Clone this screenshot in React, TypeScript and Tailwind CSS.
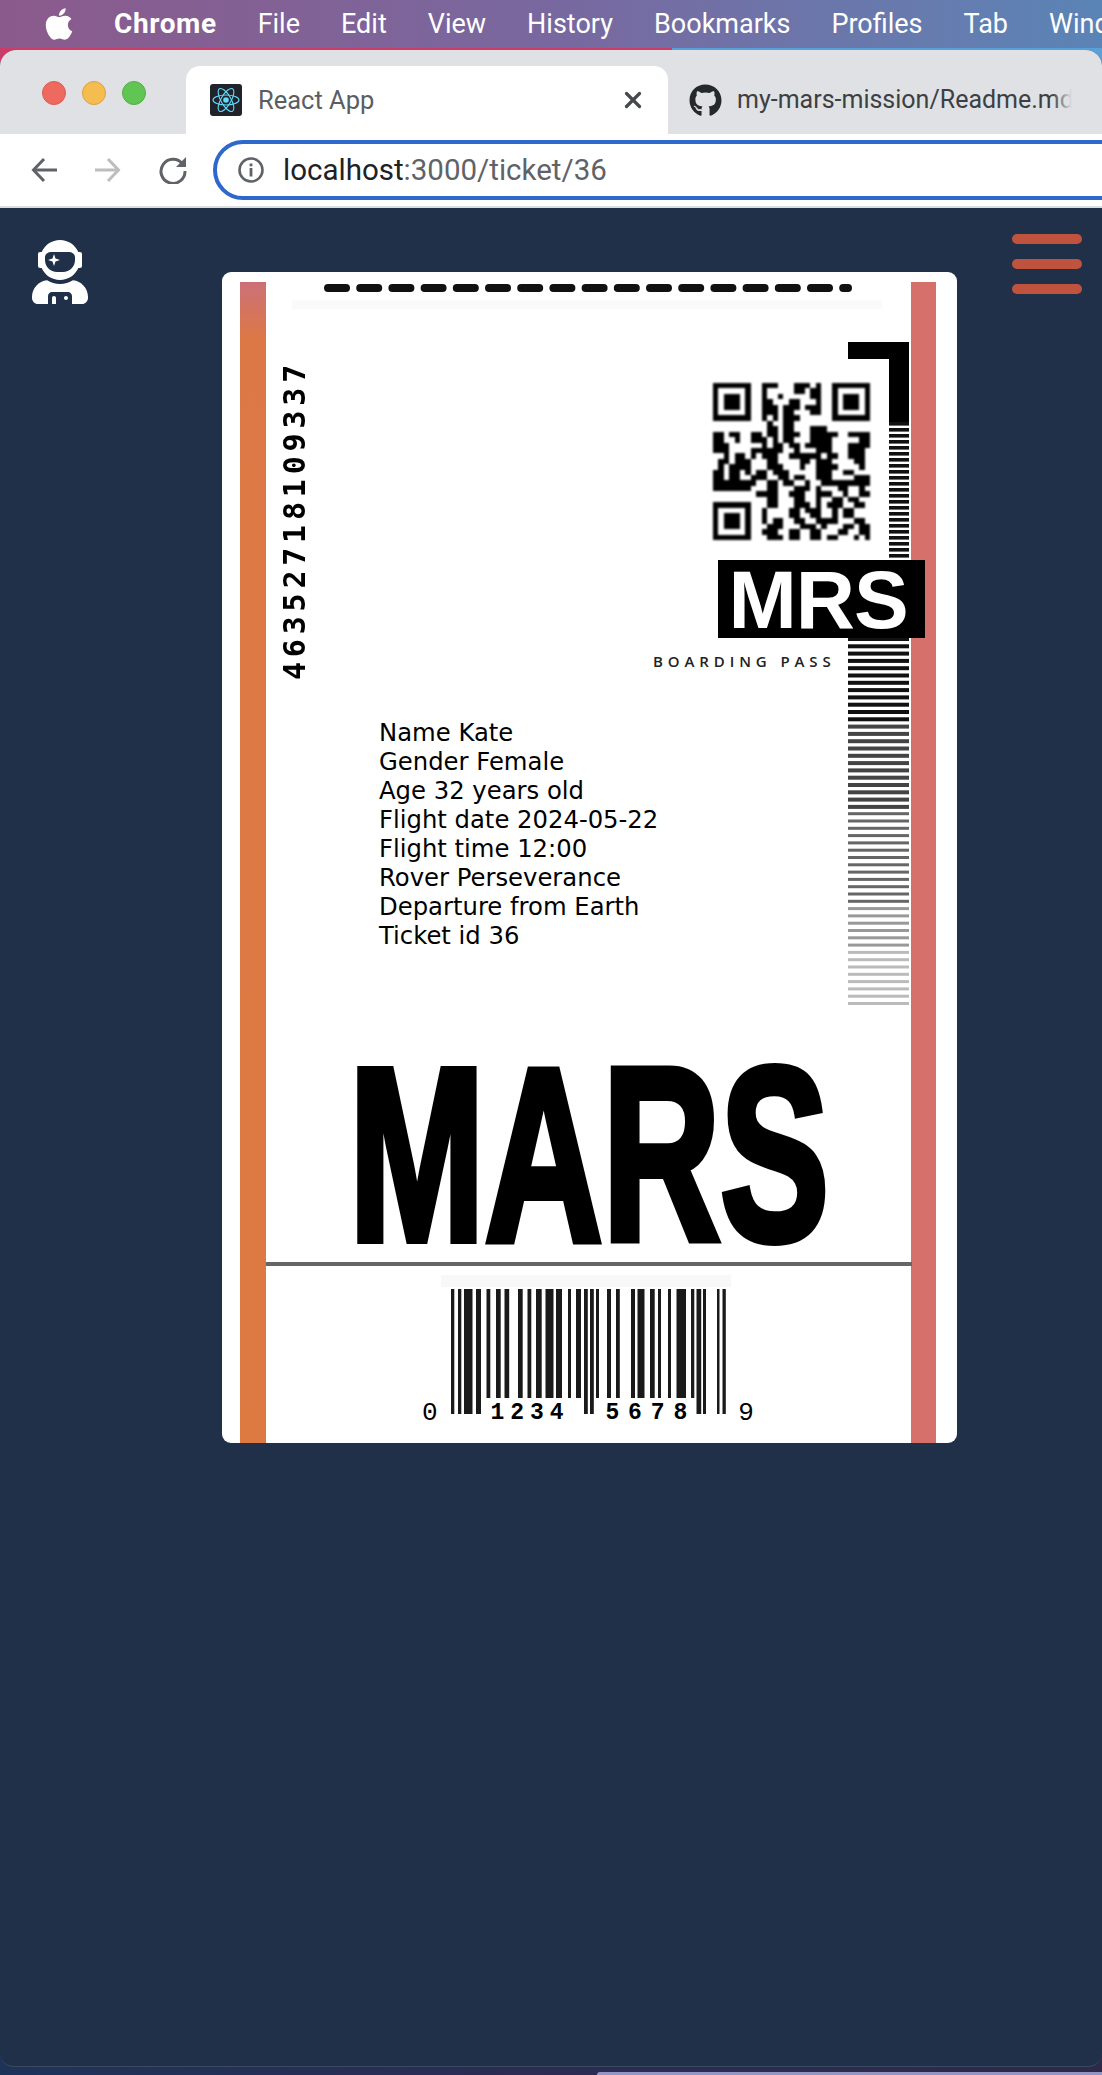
import { FaApple, FaGithub, FaUserAstronaut } from "react-icons/fa";
import { X } from "lucide-react";

const menuItems = ["File", "Edit", "View", "History", "Bookmarks", "Profiles", "Tab", "Window"];
const ticketLines = [
  "Name Kate",
  "Gender Female",
  "Age 32 years old",
  "Flight date 2024-05-22",
  "Flight time 12:00",
  "Rover Perseverance",
  "Departure from Earth",
  "Ticket id 36",
];

const qrRows = [
  "11111110011100011101001111111",
  "10000010010000011011001000001",
  "10111010010010000011001011101",
  "10111010011000110001001011101",
  "10111010011101110111001011101",
  "10000010011101100011001000001",
  "11111110010101110000001111111",
  "00000000001001100000000000000",
  "00000000001101100011100000000",
  "11011001101101110011111001111",
  "11001001110101100011110000011",
  "11100000010110110111110001111",
  "11100001111110010001110001110",
  "00101101011100111111011001110",
  "01101110001100001101110000110",
  "01011110001110001001111000010",
  "11011010110111000001110011000",
  "11011001110011011001110000111",
  "11111111001101100100111111111",
  "11111110001100011101000110010",
  "00000000111100111001110010011",
  "00000000001100011001001101100",
  "11111110001100011101011100110",
  "10000010010000110111001011000",
  "10111010010000110011001011000",
  "10111010010110011001111000110",
  "10111010001110001110100011011",
  "10000010011100110011000110011",
  "11111110001110110011011000101",
];

// x, width, long guard bar or not (ticket coordinates)
const barcodeBars: [number, number, boolean][] = [
  [229, 3.3, true], [236, 3.3, true], [242, 8.5, true], [254, 5, true],
  [264.5, 3.8, false], [274, 4.7, false], [282.5, 4.7, false], [296, 4.7, false], [305.5, 3.8, false],
  [314, 5.7, false], [323.5, 8, false], [334, 6, false], [346, 3, false], [354, 5, false],
  [362, 3.8, true], [368, 3.8, true], [374, 3, false], [385, 4, false], [394, 3.8, false],
  [409, 4, false], [415.5, 7, false], [428, 4.7, false], [436, 3, false], [446, 3, false],
  [454.5, 9.5, false], [469, 3.3, false], [474.5, 4.7, true], [481, 3, true], [495, 2.5, true], [500.5, 3.3, true],
];

const ladderRows = Array.from({ length: 51 }, (_, i) => i);

function QrCode() {
  return (
    <svg viewBox="0 0 29 29" className="h-[157px] w-[157px] blur-[0.8px]" shapeRendering="crispEdges">
      {qrRows.map((row, y) =>
        row.split("").map((cell, x) => (cell === "1" ? <rect key={x + "-" + y} x={x} y={y} width="1" height="1" fill="#000" /> : null))
      )}
    </svg>
  );
}

function TicketArt() {
  return (
    <svg viewBox="0 0 735 1171" className="absolute inset-0 h-full w-full blur-[0.7px]">
      <defs>
        <linearGradient id="leftStripe" x1="0" y1="0" x2="0" y2="1">
          <stop offset="0" stopColor="#cc7078" />
          <stop offset="0.05" stopColor="#dc7845" />
          <stop offset="1" stopColor="#dd7a42" />
        </linearGradient>
      </defs>
      <rect x="18" y="10" width="26" height="1161" fill="url(#leftStripe)" />
      <rect x="689" y="10" width="25" height="1161" fill="#d6706a" />
      <rect x="44" y="990" width="646" height="4" fill="#666" />
      <line x1="106" y1="16" x2="624" y2="16" stroke="#111" strokeWidth="8" strokeLinecap="round" strokeDasharray="18 14.2" />
      <rect x="622" y="12" width="8" height="8" rx="4" fill="#111" />
      <rect x="70" y="28" width="590" height="9" fill="#fafafa" />
      <rect x="626" y="70" width="61" height="17" fill="#000" />
      <rect x="667" y="70" width="20" height="80" fill="#000" />
      {Array.from({ length: 23 }, (_, i) => (
        <rect key={i} x="667" y={150 + i * 6} width="20" height="3.6" fill="#111" />
      ))}
      {ladderRows.map((i) => {
        const shade = i < 12 ? "#111" : i < 24 ? "#444" : i < 37 ? "#666" : i < 43 ? "#999" : "#bbb";
        return <rect key={i} x="626" y={365 + i * 7.3} width="61" height={i < 24 ? 4 : 3} fill={shade} />;
      })}
      <rect x="219" y="1003" width="290" height="12" fill="#f8f8f8" />
      {barcodeBars.map(([x, w, long]) => (
        <rect key={x} x={x} y="1017" width={w} height={long ? 125 : 109} fill="#1a1a1a" />
      ))}
    </svg>
  );
}

function ReactFavicon() {
  return (
    <svg viewBox="0 0 32 32" className="h-8 w-8 shrink-0">
      <rect width="32" height="32" rx="3" fill="#20232a" />
      <circle cx="16" cy="16" r="2.8" fill="#61dafb" />
      <g fill="none" stroke="#61dafb" strokeWidth="1.1">
        <ellipse cx="16" cy="16" rx="13" ry="5" />
        <ellipse cx="16" cy="16" rx="13" ry="5" transform="rotate(60 16 16)" />
        <ellipse cx="16" cy="16" rx="13" ry="5" transform="rotate(120 16 16)" />
      </g>
    </svg>
  );
}

function NavArrow({ flip, color }: { flip?: boolean; color: string }) {
  return (
    <svg
      viewBox="0 0 26 26"
      className={flip ? "h-[26px] w-[26px] shrink-0 -scale-x-100" : "h-[26px] w-[26px] shrink-0"}
      fill="none"
      stroke={color}
      strokeWidth="3"
    >
      <path d="M26 13H3" />
      <path d="M13 2 2.5 13 13 24" />
    </svg>
  );
}

export default function App() {
  return (
    <div className="flex h-[2075px] w-[1102px] flex-col overflow-hidden bg-linear-to-r from-[#1e3358] via-[#2b2c52] to-[#2c2a48] font-['Roboto',sans-serif]">
      <div className="flex h-[48px] shrink-0 items-center bg-linear-to-r from-[#8b5a8c] via-[#78689f] to-[#5a84b6] pl-[44px] text-[27px] leading-none whitespace-nowrap text-white">
        <FaApple className="h-[36px] w-[30px] shrink-0" />
        <span className="ml-[40px] text-[28px] font-bold tracking-[0.6px]">Chrome</span>
        <div className="ml-[41px] flex gap-[41px]">
          {menuItems.map((item) => (
            <span key={item}>{item}</span>
          ))}
        </div>
      </div>

      <div className="-mb-[17px] h-[19px] shrink-0 bg-linear-to-r from-[#c93d68] from-[61%] to-[#5aa0d8] to-[61%]" />

      <div className="relative flex h-[2017px] shrink-0 flex-col overflow-hidden rounded-t-[16px] rounded-b-[14px] border-b border-[#3b4a60] bg-[#203049]">
        <div className="flex h-[84px] shrink-0 items-end bg-[#dfe1e5]">
          <div className="flex h-[68px] w-[186px] shrink-0 items-start gap-[16px] pt-[15px] pl-[42px]">
            <span className="h-6 w-6 rounded-full border border-[#dc5a50] bg-[#ee6a5f]" />
            <span className="h-6 w-6 rounded-full border border-[#dca043] bg-[#f5bd4f]" />
            <span className="h-6 w-6 rounded-full border border-[#52ae46] bg-[#61c554]" />
          </div>
          <div className="flex h-[68px] w-[482px] shrink-0 items-center rounded-t-[14px] bg-white pr-[22px] pl-[24px]">
            <ReactFavicon />
            <span className="ml-[16px] text-[25.5px] text-[#5a5e63]">React App</span>
            <X className="ml-auto h-[26px] w-[26px] text-[#45484c]" strokeWidth={3} />
          </div>
          <div className="relative flex h-[68px] min-w-0 flex-1 items-center overflow-hidden pl-[21px]">
            <FaGithub className="h-[33px] w-[33px] shrink-0 text-[#24292e]" />
            <span className="ml-[15px] text-[25px] whitespace-nowrap text-[#3c4043]">my-mars-mission/Readme.md · GitHub</span>
            <div className="absolute top-0 right-0 bottom-0 w-[50px] bg-linear-to-r from-[#dfe1e5]/0 to-[#dfe1e5] to-40%" />
          </div>
        </div>

        <div className="flex h-[74px] shrink-0 items-center border-b-2 border-[#dcdde0] bg-white pl-[31px]">
          <NavArrow color="#5f6368" />
          <div className="ml-[38px] shrink-0">
            <NavArrow flip color="#bdbdbd" />
          </div>
          <svg viewBox="0 0 28 28" className="ml-[38px] h-[28px] w-[28px] shrink-0" fill="none">
            <path d="M23.5 8A12 12 0 1 0 26 15" stroke="#5f6368" strokeWidth="3" />
            <path d="M27 1v10H17z" fill="#5f6368" />
          </svg>
          <div className="ml-[26px] flex h-[60px] w-[1000px] shrink-0 items-center rounded-full border-[4px] border-[#2f68cc] pl-[21px]">
            <svg viewBox="0 0 26 26" className="h-[26px] w-[26px] shrink-0" fill="none">
              <circle cx="13" cy="13" r="11.5" stroke="#5f6368" strokeWidth="2.6" />
              <rect x="11.6" y="11" width="2.8" height="8.5" fill="#5f6368" />
              <rect x="11.6" y="6.5" width="2.8" height="2.8" fill="#5f6368" />
            </svg>
            <span className="ml-[19px] text-[29.5px] text-[#5f6368]">
              <span className="text-[#202124]">localhost</span>:3000/ticket/36
            </span>
          </div>
        </div>

        <div className="flex flex-1 items-start pl-[32px]">
          <FaUserAstronaut className="mt-[32px] h-[64px] w-[56px] shrink-0 text-white" />

          <div className="relative mt-[64px] ml-[134px] flex h-[1171px] w-[735px] shrink-0 flex-col overflow-hidden rounded-[9px] bg-white text-black">
            <TicketArt />
            <div className="relative flex h-[408px] shrink-0 items-start">
              <span className="mt-[88px] ml-[58px] rotate-180 font-['DejaVu_Sans_Mono',monospace] text-[30px] leading-[30px] font-bold tracking-[4.8px] whitespace-nowrap [writing-mode:vertical-rl]">
                46352718109337
              </span>
              <div className="mt-[111px] mr-[32px] ml-auto flex w-[272px] flex-col">
                <div className="ml-[60px]">
                  <QrCode />
                </div>
                <div className="mt-[20px] ml-[65px] flex h-[78px] w-[207px] items-center justify-center bg-black pr-[7px] font-['Liberation_Sans',sans-serif] text-[82px] font-bold tracking-[-1px] text-white">
                  MRS
                </div>
                <span className="mt-[14px] font-['Open_Sans',sans-serif] text-[15px] leading-[18px] font-semibold tracking-[4.9px] whitespace-nowrap text-[#222]">
                  BOARDING PASS
                </span>
              </div>
            </div>

            <div className="relative mt-[38px] ml-[157px] font-['DejaVu_Sans',sans-serif] text-[24.3px] leading-[29px]">
              {ticketLines.map((line) => (
                <div key={line}>{line}</div>
              ))}
            </div>

            <div className="relative mt-[114px] ml-[127px] h-[181px] origin-left scale-x-[0.66] font-['Liberation_Sans',sans-serif] text-[247px] leading-[181px] font-bold whitespace-nowrap [-webkit-text-stroke:8px_black]">
              MARS
            </div>

            <div className="relative mt-[158px] flex h-[20px] items-center font-['Liberation_Mono',monospace] text-[23px] leading-none font-bold">
              <span className="ml-[200px] text-[26px] font-normal">0</span>
              <span className="ml-[53px] tracking-[5.9px]">1234</span>
              <span className="ml-[36px] tracking-[8.9px]">5678</span>
              <span className="ml-[42px] text-[26px] font-normal">9</span>
            </div>
          </div>

          <div className="mt-[26px] ml-[55px] flex w-[70px] shrink-0 flex-col gap-[15px]">
            <div className="h-[10px] rounded-[5px] bg-[#c0533d]" />
            <div className="h-[10px] rounded-[5px] bg-[#c0533d]" />
            <div className="h-[10px] rounded-[5px] bg-[#c0533d]" />
          </div>
        </div>
      </div>

      <div className="mt-[5px] ml-[597px] h-[3px] shrink-0 rounded-tl-[8px] bg-[#9396c4]" />
    </div>
  );
}
